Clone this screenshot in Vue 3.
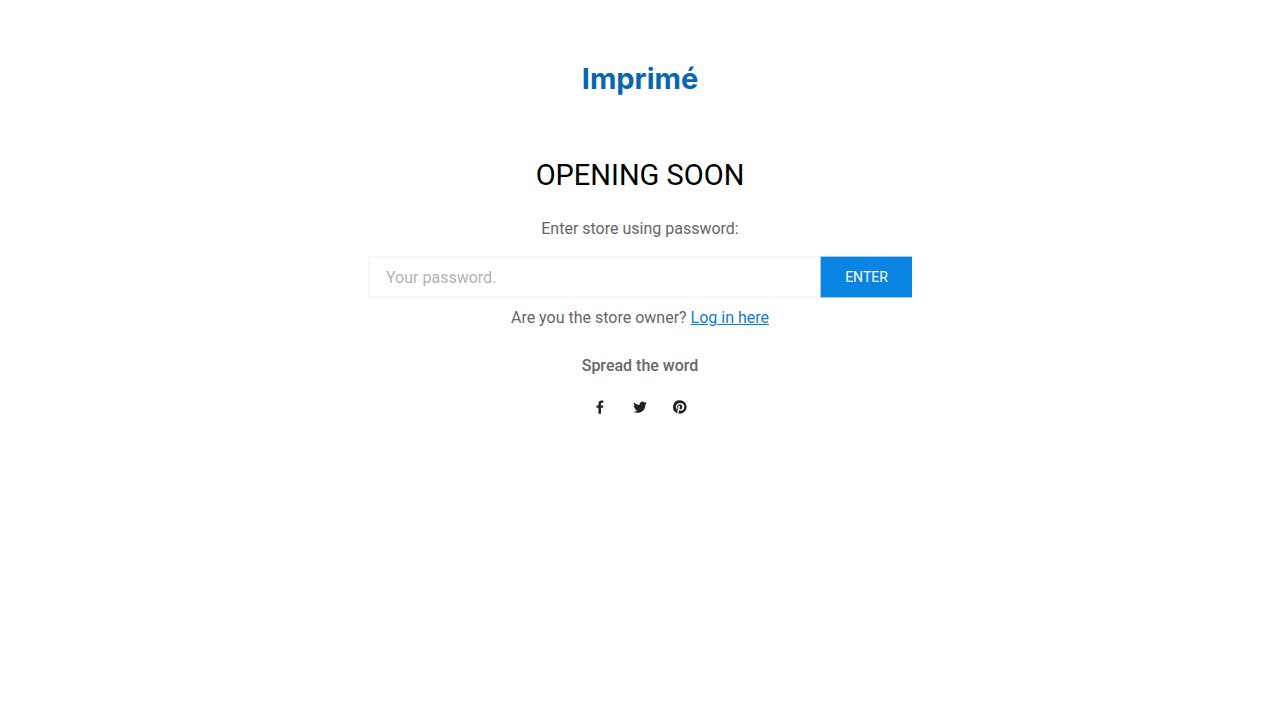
<script setup>
import { ref } from 'vue'

const password = ref('')
</script>

<template>
  <main class="page">
    <h1 class="logo">Imprimé</h1>
    <h2 class="title">OPENING SOON</h2>
    <form class="form" @submit.prevent>
      <label class="text" for="password">Enter store using password:</label>
      <div class="row">
        <input id="password" v-model="password" class="field" type="password" placeholder="Your password." />
        <button class="enter" type="submit">ENTER</button>
      </div>
    </form>
    <p class="text">Are you the store owner? <a class="link" href="#">Log in here</a></p>
    <h3 class="spread">Spread the word</h3>
    <nav class="social">
      <a class="share" href="#" aria-label="Facebook">
        <svg viewBox="0 0 20 20"><path d="M7.8 19.5V11.2H5V7.7h2.8V5.2C7.8 2.3 9.5.7 12.1.7c1.2 0 2.5.1 2.8.2v3.2h-1.7c-1.5 0-1.8.7-1.8 1.7v1.9h3.4l-.4 3.5h-3v8.3z" /></svg>
      </a>
      <a class="share" href="#" aria-label="Twitter">
        <svg viewBox="0 0 20 20"><path d="M19.6 4.5q-.7 1.1-1.8 1.9v.5q0 2.2-.9 4.4-.8 2.1-2.3 3.7t-3.7 2.4-4.6.9q-3.3 0-6-1.8.4.1.9.1 2.7 0 4.9-1.7-1.3 0-2.3-.8t-1.4-2q.4.1.8.1.5 0 1-.2-1.4-.3-2.3-1.4T1 8v-.1q.9.5 1.8.5Q1 7.2 1 5.1q0-1.1.5-2Q3 4.9 5 6t4.4 1.2q-.1-.4-.1-.9 0-1.7 1.2-2.9t2.8-1.2q1.8 0 3 1.3 1.4-.3 2.6-1-.5 1.5-1.8 2.3 1.2-.1 2.5-.3z" /></svg>
      </a>
      <a class="share" href="#" aria-label="Pinterest">
        <svg viewBox="0 0 20 20"><path d="M9.96.5a9.5 9.5 0 0 1 9.54 9.5 9.5 9.5 0 0 1-12.3 9.1c.4-.7 1-1.7 1.2-2.6l.6-2.3c.3.6 1.2 1.1 2.2 1.1 2.9 0 4.9-2.6 4.9-6 0-3.3-2.6-5.1-5.8-5.1-4.1 0-6.2 2.7-6.2 5.6 0 1.4.7 3 1.9 3.6.2.1.3 0 .3-.1l.3-1.1-.1-.4c-.4-.4-.7-1.2-.7-2 0-1.9 1.4-3.8 3.9-3.8 2.1 0 3.6 1.4 3.6 3.5 0 2.3-1.2 3.9-2.7 3.9-.9 0-1.5-.7-1.3-1.5.2-1 .7-2.1.7-2.8 0-.7-.4-1.2-1.1-1.2-.9 0-1.6.9-1.6 2.2 0 .8.3 1.3.3 1.3l-1.2 4.7c-.2.9-.2 2-.1 2.8A9.5 9.5 0 0 1 9.96.5z" /></svg>
      </a>
    </nav>
  </main>
</template>

<style>
body {
  background: #fff;
}
</style>

<style scoped>
.page {
  box-sizing: border-box;
  max-width: 544px;
  margin: 0 auto;
  padding-top: 56px;
  text-align: center;
  font-family: Roboto, sans-serif;
  font-size: 16px;
  line-height: 24px;
  color: #666;
}
.logo {
  margin: 0;
  font-family: Inter, sans-serif;
  font-size: 29px;
  line-height: 46px;
  font-weight: 700;
  color: #0766b1;
}
.title {
  margin: 54px 0 23px;
  font-size: 29px;
  line-height: 38px;
  font-weight: 400;
  color: #000;
}
.text {
  display: block;
  margin: 0;
  font-weight: 400;
}
.row {
  display: flex;
  margin: 15px 0 8px;
}
.field {
  box-sizing: border-box;
  flex: 1;
  min-width: 0;
  height: 42px;
  padding: 0 16px;
  border: 2px solid #f6f6f6;
  border-right: 0;
  border-radius: 0;
  background: #fff;
  font: 400 16px Roboto, sans-serif;
  color: #666;
  outline: none;
}
.field::placeholder {
  color: #b3b3b3;
  opacity: 1;
}
.enter {
  box-sizing: border-box;
  width: 92px;
  border: 1px solid #9dcef6;
  border-right: 0;
  background: #0a84e3;
  font: 400 14px Roboto, sans-serif;
  color: #fff;
}
.link {
  color: #0a7ce3;
}
.spread {
  margin: 24px 0 22px;
  font-size: 16px;
  line-height: 24px;
  font-weight: 500;
}
.social {
  display: flex;
  justify-content: center;
  gap: 26px;
}
.share {
  display: flex;
  color: #222;
}
.share svg {
  width: 14px;
  height: 14px;
  fill: currentColor;
}
</style>
